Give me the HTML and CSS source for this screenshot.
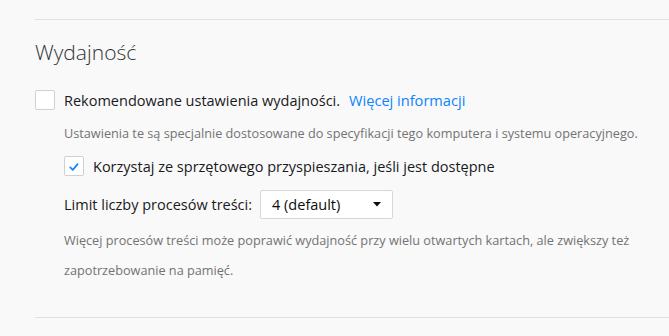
FILE: index.html
```html
<!DOCTYPE html>
<html lang="pl">
<head>
<meta charset="utf-8">
<link rel="stylesheet" href="styles.css">
</head>
<body>
<section class="group">
  <h2 class="title">Wydajność</h2>
  <div class="row main-row">
    <span class="checkbox"></span>
    <span class="label">Rekomendowane ustawienia wydajności.</span>
    <a class="link" href="#">Więcej informacji</a>
  </div>
  <div class="indent">
    <p class="desc first">Ustawienia te są specjalnie dostosowane do specyfikacji tego komputera i systemu operacyjnego.</p>
    <div class="row sub-row">
      <span class="checkbox checked">
        <svg viewBox="0 0 20 20" width="20" height="20"><path d="M5.8 10.4 L8.7 13.2 L14 6.8" fill="none" stroke="#0a84ff" stroke-width="1.8" stroke-linecap="round" stroke-linejoin="round"/></svg>
      </span>
      <span class="label">Korzystaj ze sprzętowego przyspieszania, jeśli jest dostępne</span>
    </div>
    <div class="row limit-row">
      <span class="label">Limit liczby procesów treści:</span>
      <div class="select">
        <span>4 (default)</span>
        <svg class="caret" viewBox="0 0 8 5" width="8" height="5"><path d="M0 0 H8 L4 4.5 Z" fill="#0c0c0d"/></svg>
      </div>
    </div>
    <p class="desc second">Więcej procesów treści może poprawić wydajność przy wielu otwartych kartach, ale zwiększy też zapotrzebowanie na pamięć.</p>
  </div>
</section>
</body>
</html>
```
FILE: styles.css
```css
html, body {
  margin: 0;
  padding: 0;
  background: #f9f9fa;
}
body {
  font-family: "Open Sans", "Noto Sans", sans-serif;
  color: #0c0c0d;
  width: 669px;
  height: 336px;
  overflow: hidden;
}
.group {
  margin-top: 19px;
  margin-left: 35px;
  border-top: 1px solid #e1e1e3;
  border-bottom: 1px solid #e1e1e3;
  padding-bottom: 32px;
}
.title {
  margin: 0;
  padding-top: 17px;
  font-weight: 300;
  font-size: 21px;
  line-height: 30px;
  color: #333;
}
.row {
  display: flex;
  align-items: center;
}
.main-row {
  margin-top: 23px;
  height: 20px;
}
.checkbox {
  box-sizing: border-box;
  width: 20px;
  height: 20px;
  border: 1px solid #d0d0d3;
  border-radius: 2px;
  background: #fff;
  flex: none;
  display: flex;
}
.label {
  font-size: 14.5px;
  margin-left: 9px;
  color: #1a1a1a;
}
.link {
  font-size: 14.6px;
  color: #0a84ff;
  text-decoration: none;
  margin-left: 9px;
}
.indent {
  padding-left: 29px;
}
.desc {
  margin: 0;
  font-size: 12.7px;
  color: #737373;
  line-height: 30px;
}
.desc.first {
  margin-top: 8px;
}
.sub-row {
  margin-top: 8px;
  height: 20px;
}
.limit-row {
  margin-top: 14px;
  height: 29px;
}
.limit-row .label {
  margin-left: 0;
}
.select {
  box-sizing: border-box;
  margin-left: 8px;
  width: 133px;
  height: 29px;
  background: #fff;
  border: 1px solid #d7d7db;
  border-radius: 2px;
  display: flex;
  align-items: center;
  justify-content: space-between;
  padding: 0 11px 0 11px;
  font-size: 14.5px;
  color: #0c0c0d;
}
.desc.second {
  margin-top: 6px;
  width: 590px;
}
```
